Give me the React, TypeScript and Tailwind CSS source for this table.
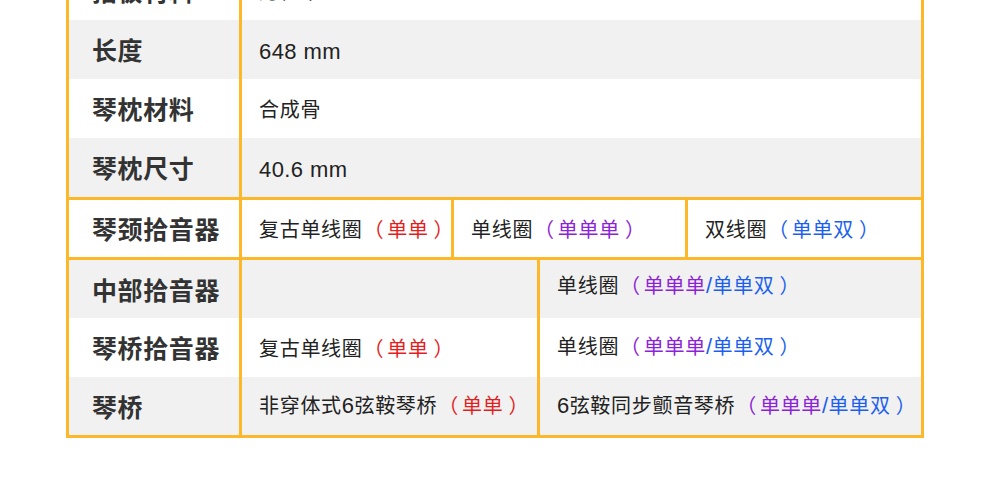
import React from "react";

const R = "text-[#e31e1e]";
const P = "text-[#8d23d6]";
const B = "text-[#1c5ff0]";

const font = { fontFamily: '"Noto Sans CJK SC", "Noto Sans", sans-serif' };
const latin = { fontFamily: '"Liberation Sans", Arial, sans-serif' };

function L({ children }: { children: React.ReactNode }) {
  return (
    <span className="text-[22px] tracking-[0.4px]" style={latin}>
      {children}
    </span>
  );
}

function O() {
  return <span className="inline-block pl-[1px] pr-[3px]">（</span>;
}
function C() {
  return <span className="inline-block pl-[5px]">）</span>;
}

function Label({ children }: { children: React.ReactNode }) {
  return (
    <div className="w-[170px] shrink-0 pl-[23px] flex items-center text-[25px] tracking-[0.6px] font-bold text-[#333] leading-none">
      {children}
    </div>
  );
}

function Val({ children, className = "" }: { children: React.ReactNode; className?: string }) {
  return (
    <div
      className={
        "flex items-center pl-[17px] text-[20px] tracking-[0.7px] text-[#222] leading-none whitespace-nowrap " +
        className
      }
    >
      <span>{children}</span>
    </div>
  );
}

export default function App() {
  const rowsA: [string, React.ReactNode, string, string][] = [
    ["指板材料", "月桂木", "bg-white", ""],
    ["长度", <L key="a">648 mm</L>, "bg-[#f1f1f1]", "pt-[4px]"],
    ["琴枕材料", "合成骨", "bg-white", ""],
    ["琴枕尺寸", <L key="b">40.6 mm</L>, "bg-[#f1f1f1]", "pt-[4px]"],
  ];
  return (
    <div className="w-[990px] h-[503px] bg-white overflow-hidden" style={font}>
      <div className="ml-[66px] w-[858px] mt-[-42px] border-[3px] border-[#fcb828]">
        {rowsA.map(([l, v, bg, pad], i) => (
          <div key={i} className={"flex h-[59px] " + bg}>
            <Label>{l}</Label>
            <Val className={"flex-1 border-l-[3px] border-[#fcb828] " + pad}>{v}</Val>
          </div>
        ))}
        <div className="flex h-[60px] bg-white border-t-[3px] border-[#fcb828]">
          <Label>琴颈拾音器</Label>
          <Val className="w-[212px] border-l-[3px] border-[#fcb828]">
            复古单线圈
            <span className={R}>
              <O />单单<C />
            </span>
          </Val>
          <Val className="w-[234px] border-l-[3px] border-[#fcb828] pl-[15px]">
            单线圈
            <span className={P}>
              <O />单单单<C />
            </span>
          </Val>
          <Val className="flex-1 border-l-[3px] border-[#fcb828] pl-[16px]">
            双线圈
            <span className={B}>
              <O />单单双<C />
            </span>
          </Val>
        </div>
        <div className="border-t-[3px] border-[#fcb828]">
          <div className="flex h-[58px] bg-[#f1f1f1]">
            <Label>中部拾音器</Label>
            <Val className="w-[298px] border-l-[3px] border-[#fcb828]">{""}</Val>
            <Val className="flex-1 border-l-[3px] border-[#fcb828] pb-[6px]">
              单线圈
              <span className={P}>
                <O />单单单
              </span>
              <span className={B}>
                <L>/</L>单单双<C />
              </span>
            </Val>
          </div>
          <div className="flex h-[59px] bg-white">
            <Label>琴桥拾音器</Label>
            <Val className="w-[298px] border-l-[3px] border-[#fcb828] pt-[1px]">
              复古单线圈
              <span className={R}>
                <O />单单<C />
              </span>
            </Val>
            <Val className="flex-1 border-l-[3px] border-[#fcb828] pb-[2px]">
              单线圈
              <span className={P}>
                <O />单单单
              </span>
              <span className={B}>
                <L>/</L>单单双<C />
              </span>
            </Val>
          </div>
          <div className="flex h-[58px] bg-[#f1f1f1]">
            <Label>琴桥</Label>
            <Val className="w-[298px] border-l-[3px] border-[#fcb828]">
              非穿体式<L>6</L>弦鞍琴桥
              <span className={R}>
                <O />单单<C />
              </span>
            </Val>
            <Val className="flex-1 border-l-[3px] border-[#fcb828]">
              <L>6</L>弦鞍同步颤音琴桥
              <span className={P}>
                <O />单单单
              </span>
              <span className={B}>
                <L>/</L>单单双<C />
              </span>
            </Val>
          </div>
        </div>
      </div>
    </div>
  );
}
